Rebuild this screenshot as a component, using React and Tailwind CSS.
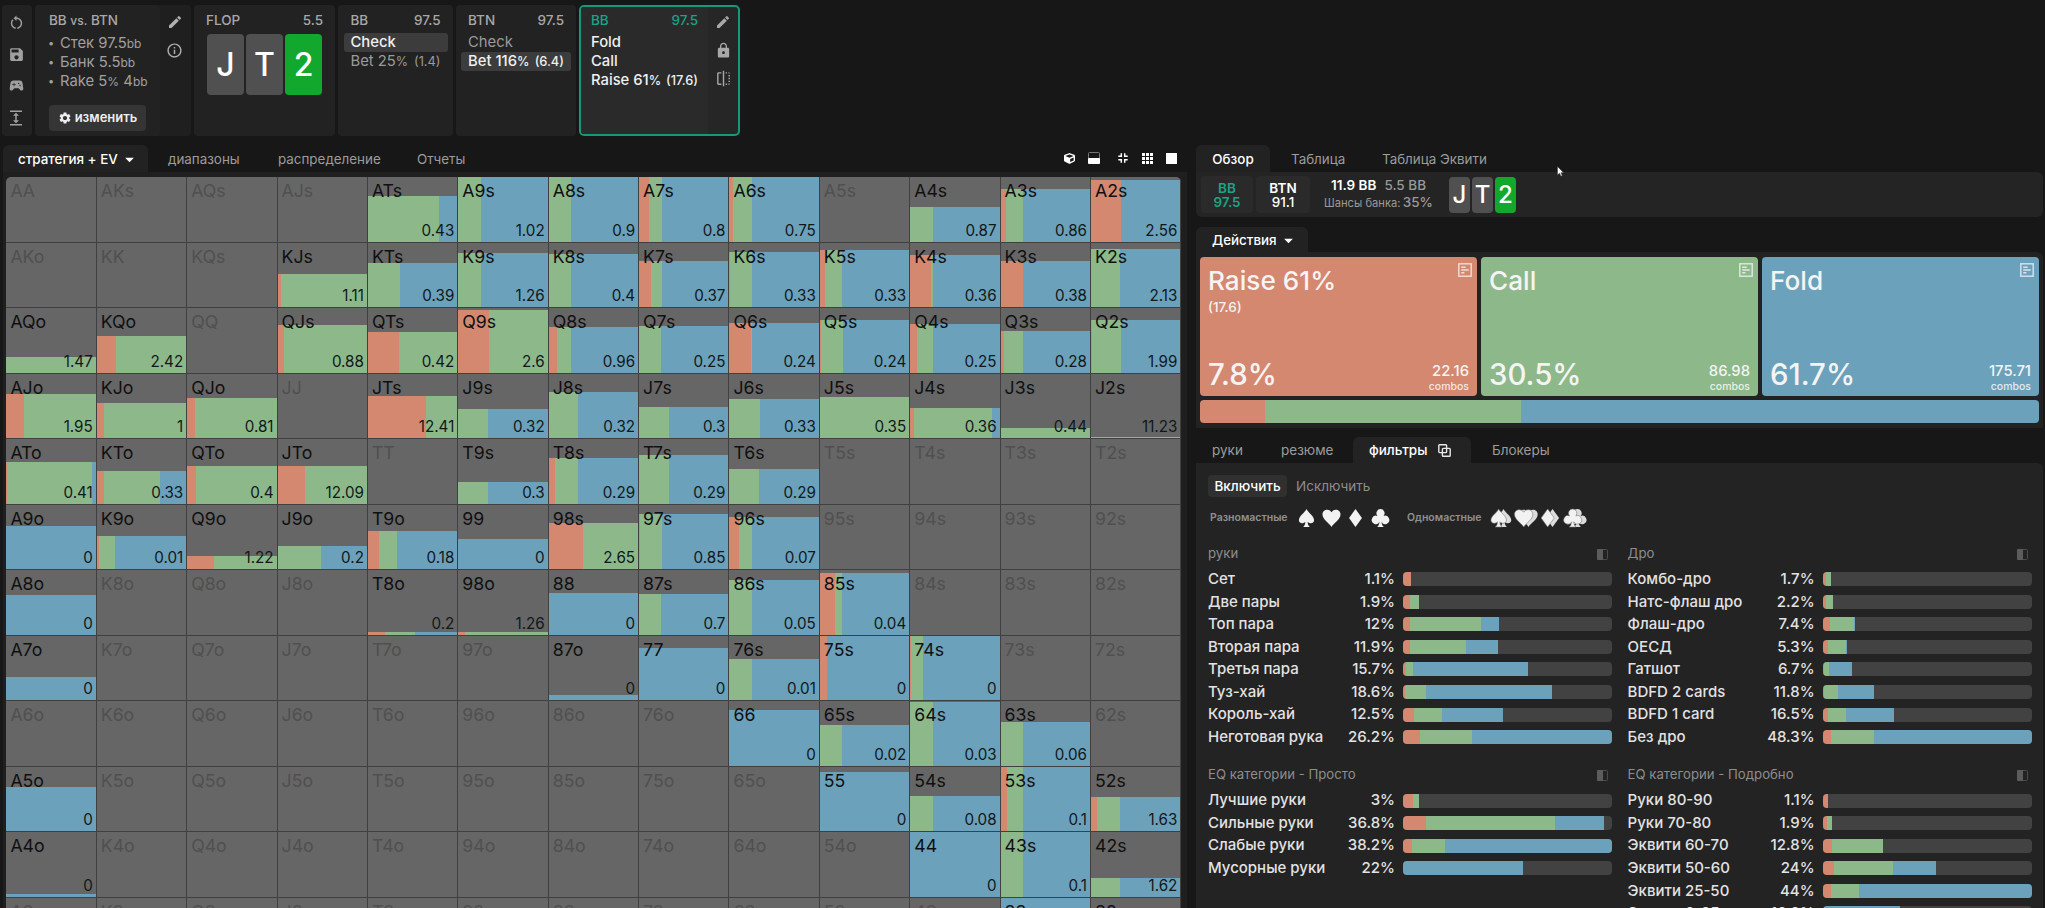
import React from "react";
import {
  MdRestartAlt,
  MdSave,
  MdSportsEsports,
  MdExpand,
  MdEdit,
  MdInfoOutline,
  MdLock,
  MdFlip,
  MdSettings,
  MdArrowDropDown,
} from "react-icons/md";
import { FaCube } from "react-icons/fa";

const RANKS = "AKQJT98765432".split("");

// hand: [ev, height %, raise %, call %] - the remainder of the width is fold
const HANDS = {
  ATs: ["0.43", 70, 0, 79],
  A9s: ["1.02", 100, 0, 25],
  A8s: ["0.9", 100, 0, 25],
  A7s: ["0.8", 100, 11.5, 14],
  A6s: ["0.75", 100, 4, 21],
  A4s: ["0.87", 53, 0, 25],
  A3s: ["0.86", 81.5, 6.5, 19],
  A2s: ["2.56", 95.5, 33.5, 0],
  KJs: ["1.11", 51, 4, 96],
  KTs: ["0.39", 67.5, 0, 35.5],
  K9s: ["1.26", 84, 0, 25],
  K8s: ["0.4", 81.5, 0, 25],
  K7s: ["0.37", 71.5, 13.5, 12],
  K6s: ["0.33", 85, 1, 24.5],
  K5s: ["0.33", 88, 6, 19],
  K4s: ["0.36", 80.5, 23.5, 1.5],
  K3s: ["0.38", 71.5, 24.5, 1],
  K2s: ["2.13", 90, 0, 33],
  AQo: ["1.47", 23.5, 0, 100],
  KQo: ["2.42", 56.5, 21.5, 78.5],
  QJs: ["0.88", 74, 7.5, 92.5],
  QTs: ["0.42", 63, 34.5, 65.5],
  Q9s: ["2.6", 97, 34.5, 65.5],
  Q8s: ["0.96", 70.5, 9, 16],
  Q7s: ["0.25", 72.5, 0, 25],
  Q6s: ["0.24", 77.5, 24, 1],
  Q5s: ["0.24", 81, 1, 24.5],
  Q4s: ["0.25", 75.5, 8, 17],
  Q3s: ["0.28", 65, 4, 21.5],
  Q2s: ["1.99", 81, 1, 33],
  AJo: ["1.95", 68.5, 19.5, 80.5],
  KJo: ["1", 54, 8, 92],
  QJo: ["0.81", 61.5, 9, 91],
  JTs: ["12.41", 64.5, 64.5, 35.5],
  J9s: ["0.32", 45.5, 0, 33],
  J8s: ["0.32", 71, 0, 33],
  J7s: ["0.3", 48.5, 0, 33.5],
  J6s: ["0.33", 61, 0, 34],
  J5s: ["0.35", 63, 0, 100],
  J4s: ["0.36", 47, 4, 88],
  J3s: ["0.44", 16, 0, 100],
  J2s: ["11.23", 1, 0, 100],
  ATo: ["0.41", 64, 1, 95],
  KTo: ["0.33", 50.5, 8, 63],
  QTo: ["0.4", 57.5, 9.5, 90.5],
  JTo: ["12.09", 58, 30.5, 69.5],
  T9s: ["0.3", 33, 0, 33],
  T8s: ["0.29", 71, 7, 26],
  T7s: ["0.29", 75.5, 0, 33.5],
  T6s: ["0.29", 53, 0, 33.5],
  A9o: ["0", 67, 0, 0],
  K9o: ["0.01", 51, 2.5, 17.5],
  Q9o: ["1.22", 19.5, 30, 70],
  J9o: ["0.2", 35.5, 0, 48.5],
  T9o: ["0.18", 59, 12, 21],
  99: ["0", 46.5, 0, 0],
  "98s": ["2.65", 72, 38.5, 61.5],
  "97s": ["0.85", 86, 1, 24.5],
  "96s": ["0.07", 81, 10.5, 14.5],
  A8o: ["0", 61, 0, 0],
  T8o: ["0.2", 4, 19.5, 33],
  "98o": ["1.26", 4, 7, 93],
  88: ["0", 65, 0, 0],
  "87s": ["0.7", 63, 0, 25],
  "86s": ["0.05", 85, 0, 25],
  "85s": ["0.04", 95.5, 16.5, 8.5],
  A7o: ["0", 35.5, 0, 0],
  "87o": ["0", 8, 0, 0],
  77: ["0", 80, 0, 0],
  "76s": ["0.01", 64, 0, 25],
  "75s": ["0", 100, 8, 0],
  "74s": ["0", 100, 1, 13.5],
  66: ["0", 86, 0, 0],
  "65s": ["0.02", 63, 0, 25],
  "64s": ["0.03", 99, 0, 25],
  "63s": ["0.06", 68, 0, 25.5],
  A5o: ["0", 69, 0, 0],
  55: ["0", 91, 0, 0],
  "54s": ["0.08", 55, 0, 25],
  "53s": ["0.1", 100, 7, 18.5],
  "52s": ["1.63", 53, 7, 26],
  A4o: ["0", 4, 0, 0],
  44: ["0", 100, 0, 0],
  "43s": ["0.1", 100, 0, 25.5],
  "42s": ["1.62", 28, 0, 33],
  33: ["0", 100, 0, 0],
  "32s": ["1.6", 20, 0, 33],
};

function handName(r, c) {
  if (r === c) return RANKS[r] + RANKS[r];
  return c > r ? RANKS[r] + RANKS[c] + "s" : RANKS[c] + RANKS[r] + "o";
}

function Cell({ name }) {
  const h = HANDS[name];
  return (
    <div className="relative flex flex-col justify-end overflow-hidden border-r border-b border-[#404040] bg-[#666666]">
      {h && (
        <div className="flex w-full" style={{ height: `${h[1]}%` }}>
          <div className="bg-[#d4886f]" style={{ width: `${h[2]}%` }} />
          <div className="bg-[#8db98a]" style={{ width: `${h[3]}%` }} />
          <div className="flex-1 bg-[#6ca1bb]" />
        </div>
      )}
      <span
        className={`absolute top-[2px] left-[4px] text-[17.7px] leading-[24px] ${h ? "text-[#101010]" : "text-[#505050]"}`}
      >
        {name}
      </span>
      {h && (
        <span className="absolute right-[3px] bottom-[1px] text-[15.2px] leading-[20px] text-[#10181a]">{h[0]}</span>
      )}
    </div>
  );
}

function PlayingCard({ children, green, small }) {
  return (
    <div
      className={`flex items-center justify-center font-medium text-white ${small ? "h-[36px] w-[21px] rounded-[4px] text-[24px]" : "h-[61px] w-[37px] rounded-[4px] text-[32px]"} ${green ? "bg-[#12a82e]" : "bg-[#505050]"}`}
    >
      {children}
    </div>
  );
}

function Action({ children, size, active, dim }) {
  return (
    <div
      className={`-mx-[7px] flex h-[19px] items-center rounded-[3px] px-[7px] whitespace-nowrap ${active ? "bg-[#3c3c3c]" : ""} ${dim ? "text-[#9a9a9a]" : "font-medium text-[#f0f0f0]"}`}
    >
      <span>{children}</span>
      {size && (
        <>
          <span className="pt-px text-[12.5px]">%</span>
          <span className="ml-auto text-[12.8px]">({size})</span>
        </>
      )}
    </div>
  );
}

function NodeHead({ name, stack, green }) {
  return (
    <div
      className={`flex h-[18px] items-center justify-between text-[13.5px] font-medium ${green ? "text-[#17a583]" : "text-[#a8a8a8]"}`}
    >
      <span>{name}</span>
      <span>{stack}</span>
    </div>
  );
}

function TopBar() {
  return (
    <div className="flex h-[131px] gap-[3px] pl-[2px] text-[14.8px]">
      <div className="flex w-[30px] flex-col items-center justify-between rounded bg-[#222222] py-[9px] pr-[2px] text-[#a0a0a0]">
        <MdRestartAlt size={17} />
        <MdSave size={17} />
        <MdSportsEsports size={17} />
        <MdExpand size={18} />
      </div>
      <div className="flex w-[156px] rounded bg-[#1f1f1f]">
        <div className="w-[125px] rounded bg-[#222222] pt-[6px] pl-[14px] text-[#a0a0a0]">
          <div className="text-[13.5px] leading-[18px] font-medium text-[#a8a8a8]">
            BB <span className="text-[12px]">vs.</span> BTN
          </div>
          <ul className="mt-[4px] -ml-px whitespace-nowrap">
            {[
              ["Стек 97.5", "bb", ""],
              ["Банк 5.5", "bb", ""],
              ["Rake 5", "%", " 4"],
            ].map(([a, b, c]) => (
              <li key={a} className="flex h-[19px] items-center">
                <span className="w-[12px] text-[11px]">•</span>
                <span>
                  {a}
                  <span className="text-[12px]">{b}</span>
                  {c && (
                    <>
                      {c}
                      <span className="text-[12px]">bb</span>
                    </>
                  )}
                </span>
              </li>
            ))}
          </ul>
          <button className="mt-[14px] flex h-[26px] w-[97px] items-center justify-center gap-[3px] rounded bg-[#353535] text-[13px] font-semibold text-[#eeeeee]">
            <MdSettings size={14} />
            изменить
          </button>
        </div>
        <div className="flex flex-1 flex-col items-center gap-[12px] pt-[9px] pr-[2px] text-[#b0b0b0]">
          <MdEdit size={16} />
          <MdInfoOutline size={17} />
        </div>
      </div>
      <div className="w-[141px] rounded bg-[#222222] px-[12px] pt-[6px]">
        <NodeHead name="FLOP" stack="5.5" />
        <div className="mt-[5px] ml-[1px] flex gap-[2px]">
          <PlayingCard>J</PlayingCard>
          <PlayingCard>T</PlayingCard>
          <PlayingCard green>2</PlayingCard>
        </div>
      </div>
      <div className="w-[115px] rounded bg-[#222222] px-[12.5px] pt-[6px]">
        <NodeHead name="BB" stack="97.5" />
        <div className="mt-[4px]">
          <Action active>Check</Action>
          <Action dim size="1.4">
            Bet 25
          </Action>
        </div>
      </div>
      <div className="w-[120px] rounded bg-[#222222] px-[12px] pt-[6px]">
        <NodeHead name="BTN" stack="97.5" />
        <div className="mt-[4px]">
          <Action dim>Check</Action>
          <Action active size="6.4">
            Bet 116
          </Action>
        </div>
      </div>
      <div className="flex w-[161px] overflow-hidden rounded-[5px] border-2 border-[#149a7a] bg-[#262626]">
        <div className="w-[127px] bg-[#2a2a2a] pt-[4px] pr-[10px] pl-[10px]">
          <NodeHead name="BB" stack="97.5" green />
          <div className="mt-[4px]">
            <Action>Fold</Action>
            <Action>Call</Action>
            <Action size="17.6">Raise 61</Action>
          </div>
        </div>
        <div className="flex flex-1 flex-col items-center gap-[11.5px] pt-[7px] text-[#a8a8a8]">
          <MdEdit size={16} />
          <MdLock size={17} />
          <MdFlip size={17} />
        </div>
      </div>
    </div>
  );
}

function GridPanel() {
  return (
    <div className="flex w-[1187px] flex-col pl-[3px]">
      <div className="flex h-[27px] shrink-0 items-center pr-[10px] text-[13.4px] text-[#9c9c9c]">
        <div className="flex h-full w-[145px] items-center rounded-t-[6px] bg-[#222222] pt-px pl-[15px] font-medium whitespace-nowrap text-white">
          стратегия + EV
          <MdArrowDropDown size={21} className="ml-px" />
        </div>
        <span className="w-[109px] pt-[2px] pl-[20px]">диапазоны</span>
        <span className="w-[140px] pt-[2px] pl-[21px]">распределение</span>
        <span className="pt-[2px] pl-[20px]">Отчеты</span>
        <div className="ml-auto flex items-center pb-px text-white">
          <FaCube size={11} className="mr-[13px]" />
          <svg width="12" height="12" viewBox="0 0 12 12" className="mr-[18px]">
            <rect x="0.5" y="0.5" width="11" height="11" rx="1" fill="none" stroke="#777" />
            <rect x="0" y="6" width="12" height="6" rx="1" fill="#fff" />
          </svg>
          <svg width="10" height="10" viewBox="0 0 10 10" className="mr-[14px]" fill="none" stroke="#fff" strokeWidth="1.5">
            <path d="M3.3 0.3v3h-3M6.7 0.3v3h3M3.3 9.7v-3h-3M6.7 9.7v-3h3" />
          </svg>
          <svg width="11" height="11" viewBox="0 0 11 11" className="mr-[13px]" fill="#fff">
            {[0, 4, 8].map((y) => [0, 4, 8].map((x) => <rect key={`${x}-${y}`} x={x} y={y} width="3" height="3" />))}
          </svg>
          <div className="h-[11px] w-[11px] bg-white" />
        </div>
      </div>
      <div className="min-h-0 flex-1 bg-[#1f1f1f] pt-[5px] pl-[3.4px]">
        <div className="grid h-[851.5px] w-[1175px] grid-cols-13 grid-rows-13 overflow-hidden rounded-t-[5px]">
          {RANKS.map((_, r) => RANKS.map((__, c) => <Cell key={`${r}-${c}`} name={handName(r, c)} />))}
        </div>
      </div>
    </div>
  );
}

function NoteIcon() {
  return (
    <svg width="14" height="14" viewBox="0 0 14 14" fill="none" stroke="#ffffffb8" strokeWidth="1.4">
      <rect x="0.8" y="0.8" width="12.4" height="12.4" />
      <path d="M3.2 4.2h4.5M3.2 7h7.5M3.2 9.8h3.2" />
    </svg>
  );
}

function ActionCard({ title, size, pct, combos, bg }) {
  return (
    <div className={`flex flex-1 flex-col justify-between rounded-[4px] px-[8px] pt-[6px] pb-[3px] text-[#f4f4f4] ${bg}`}>
      <div className="flex justify-between">
        <div>
          <div className="pt-[2px] text-[26.2px] leading-[32px] font-medium">{title}</div>
          {size && <div className="mt-px text-[13.5px] leading-[18px] font-medium">({size})</div>}
        </div>
        <div className="-mr-[3px]">
          <NoteIcon />
        </div>
      </div>
      <div className="flex items-end justify-between">
        <div className="pb-px text-[29.4px] leading-[34px] font-medium">{pct}</div>
        <div className="text-right font-medium">
          <div className="text-[14.8px] leading-[17px]">{combos}</div>
          <div className="text-[10.5px] leading-[13px] text-[#ffffffcc]">combos</div>
        </div>
      </div>
    </div>
  );
}

const SUITS = {
  spade: "M10 1C8 5 2 8 2 12.2c0 3 4.2 4.3 6.8 1.6C8.8 16 8 18 6.5 19h7C12 18 11.2 16 11.2 13.8c2.6 2.7 6.8 1.4 6.8-1.6C18 8 12 5 10 1z",
  heart: "M10 19C8 15.5 0.5 11.5 0.5 6.3 0.5 1.2 7.5 0 10 4.2 12.5 0 19.5 1.2 19.5 6.3 19.5 11.5 12 15.5 10 19z",
  diamond: "M10 1l6.8 9L10 19l-6.8-9z",
  club: "M10 1a4.2 4.2 0 0 0-3.3 6.9A4.3 4.3 0 1 0 8.9 13.8C8.8 16 8 18 6.5 19h7c-1.5-1-2.3-3-2.4-5.2a4.3 4.3 0 1 0 2.2-5.9A4.2 4.2 0 0 0 10 1z",
};

function Suit({ kind, double }) {
  if (!double)
    return (
      <svg width="19" height="20" viewBox="0 0 20 20" preserveAspectRatio="none" fill="#f2f2f2">
        <path d={SUITS[kind]} />
      </svg>
    );
  return (
    <svg width="24.5" height="20" viewBox="0 0 25.3 20" preserveAspectRatio="none">
      <path d={SUITS[kind]} transform="translate(5 0)" fill="#dcdcdc" />
      <path d={SUITS[kind]} fill="#f2f2f2" stroke="#777" strokeWidth="0.6" />
    </svg>
  );
}

// [label, percent, raise end, call end, fold end]
const LEFT_TOP = [
  ["Сет", "1.1%", 4, 4, 4],
  ["Две пары", "1.9%", 3.3, 7.5, 7.5],
  ["Топ пара", "12%", 3.3, 37.5, 46],
  ["Вторая пара", "11.9%", 3.5, 30, 45.6],
  ["Третья пара", "15.7%", 1.6, 5, 60],
  ["Туз-хай", "18.6%", 0.8, 11.2, 71.1],
  ["Король-хай", "12.5%", 5.1, 18.7, 47.7],
  ["Неготовая рука", "26.2%", 8.3, 33, 100],
];
const RIGHT_TOP = [
  ["Комбо-дро", "1.7%", 1.6, 3.8, 3.8],
  ["Натс-флаш дро", "2.2%", 1.4, 4.8, 4.8],
  ["Флаш-дро", "7.4%", 3.7, 15.1, 15.6],
  ["ОЕСД", "5.3%", 2.7, 11.1, 11.3],
  ["Гатшот", "6.7%", 0.6, 3.2, 14.3],
  ["BDFD 2 cards", "11.8%", 0.5, 7.2, 24.6],
  ["BDFD 1 card", "16.5%", 2.7, 11.3, 34.2],
  ["Без дро", "48.3%", 4.1, 24.5, 100],
];
const LEFT_EQ = [
  ["Лучшие руки", "3%", 5, 7.9, 7.9],
  ["Сильные руки", "36.8%", 11, 72.5, 96.3],
  ["Слабые руки", "38.2%", 4.2, 20.2, 100],
  ["Мусорные руки", "22%", 0, 0, 57.3],
];
const RIGHT_EQ = [
  ["Руки 80-90", "1.1%", 2.6, 2.6, 2.6],
  ["Руки 70-80", "1.9%", 2, 4.5, 4.5],
  ["Эквити 60-70", "12.8%", 4.5, 29, 29],
  ["Эквити 50-60", "24%", 5.5, 33.8, 54.2],
  ["Эквити 25-50", "44%", 4, 17.5, 100],
  ["Эквити 0-25", "16.2%", 0, 0, 37],
];

function FilterGroup({ title, rows }) {
  return (
    <div className="w-[404px]">
      <div className="flex h-[22px] items-center justify-between pr-[4px] text-[13.2px] text-[#8d8d8d]">
        {title}
        <svg width="11" height="11" viewBox="0 0 11 11">
          <rect x="0.5" y="0.5" width="10" height="10" rx="1" fill="none" stroke="#4c4c4c" />
          <rect x="0" y="0" width="6" height="11" rx="1" fill="#5c5c5c" />
        </svg>
      </div>
      <div className="mt-[3px]">
        {rows.map(([label, pct, a, b, c]) => (
          <div key={label} className="flex h-[22.56px] items-center text-[15px] font-medium text-[#e2e2e2]">
            <span className="flex-1 whitespace-nowrap">{label}</span>
            <span className="mr-[8px]">{pct}</span>
            <div className="flex h-[14px] w-[209px] overflow-hidden rounded-[4px] bg-[#424242]">
              <div className="bg-[#d4886f]" style={{ width: `${a}%` }} />
              <div className="bg-[#8db98a]" style={{ width: `${b - a}%` }} />
              <div className="bg-[#6ca1bb]" style={{ width: `${c - b}%` }} />
            </div>
          </div>
        ))}
      </div>
    </div>
  );
}

function Overview() {
  return (
    <>
      <div className="flex h-[27px] items-center text-[13.4px] text-[#9c9c9c]">
        <span className="flex h-full w-[74px] items-center justify-center rounded-t-[6px] bg-[#222222] pt-[2px] font-medium text-white">
          Обзор
        </span>
        <span className="ml-[21px] w-[91px] pt-[2px]">Таблица</span>
        <span className="pt-[2px]">Таблица Эквити</span>
      </div>
      <div className="flex h-[45px] items-center rounded-tr-[6px] rounded-b-[6px] bg-[#242424] pl-[5px]">
        <div className="flex h-[37px] w-[52px] flex-col items-center justify-center rounded bg-[#2a2a2a] text-[13.5px] leading-[14px] text-[#17a583]">
          <span className="font-semibold">BB</span>
          <span className="font-semibold">97.5</span>
        </div>
        <div className="ml-[3px] flex h-[37px] w-[54px] flex-col items-center justify-center rounded bg-[#2a2a2a] text-[13.5px] leading-[14px] text-white">
          <span className="font-semibold">BTN</span>
          <span className="font-medium">91.1</span>
        </div>
        <div className="ml-[14px] flex w-[109px] flex-col text-[#9a9a9a]">
          <div className="flex justify-center gap-[8px] text-[13.5px] leading-[17px]">
            <span className="font-semibold text-white">11.9 BB</span>
            <span className="font-medium">5.5 BB</span>
          </div>
          <div className="flex items-baseline justify-between text-[11.2px] leading-[17px] whitespace-nowrap">
            <span>Шансы банка:</span>
            <span className="text-[13.5px] font-medium">35%</span>
          </div>
        </div>
        <div className="ml-[16px] flex gap-[2px]">
          <PlayingCard small>J</PlayingCard>
          <PlayingCard small>T</PlayingCard>
          <PlayingCard small green>
            2
          </PlayingCard>
        </div>
      </div>
    </>
  );
}

export default function App() {
  return (
    <div className="relative flex h-[908px] w-[2045px] flex-col overflow-hidden bg-[#171717] pt-[5px] font-['Inter',sans-serif]">
      <TopBar />
      <div className="mt-[9px] flex h-[763px]">
        <GridPanel />
        <div className="ml-[9px] w-[847px]">
          <Overview />
          <div className="mt-[10px] flex h-[25px] w-[112px] items-center rounded-t-[6px] bg-[#222222] pt-px pl-[16px] text-[13.4px] font-medium text-white">
            Действия
            <MdArrowDropDown size={21} className="ml-px" />
          </div>
          <div className="h-[176px] rounded-tr-[6px] bg-[#222222] px-[4px] pt-[5px]">
            <div className="flex h-[139px] gap-[4px]">
              <ActionCard title="Raise 61%" size="17.6" pct="7.8%" combos="22.16" bg="bg-[#d4886f]" />
              <ActionCard title="Call" pct="30.5%" combos="86.98" bg="bg-[#8db98a]" />
              <ActionCard title="Fold" pct="61.7%" combos="175.71" bg="bg-[#6ca1bb]" />
            </div>
            <div className="mt-[4px] flex h-[23px] overflow-hidden rounded-[4px]">
              <div className="w-[7.7%] bg-[#d4886f]" />
              <div className="w-[30.6%] bg-[#8db98a]" />
              <div className="flex-1 bg-[#6ca1bb]" />
            </div>
          </div>
          <div className="mt-[9px] flex h-[26px] items-center text-[13.5px] text-[#9c9c9c]">
            <span className="w-[68px] pt-px pl-[16px]">руки</span>
            <span className="w-[89px] pt-px pl-[17px]">резюме</span>
            <span className="flex h-full w-[118px] items-center gap-[11px] rounded-t-[6px] bg-[#232323] pl-[16px] font-medium text-white">
              <span className="pt-px">фильтры</span>
              <svg width="13" height="13" viewBox="0 0 13 13" fill="none" stroke="#e8e8e8" strokeWidth="1.4">
                <rect x="0.8" y="0.8" width="7.8" height="7.8" rx="0.8" />
                <rect x="4.4" y="4.4" width="7.8" height="7.8" rx="0.8" />
              </svg>
            </span>
            <span className="pt-px pl-[21px]">Блокеры</span>
          </div>
          <div className="h-[460px] rounded-tr-[6px] bg-[#232323] pt-[12px] pl-[12px]">
            <div className="flex h-[22px] items-center text-[13.5px]">
              <span className="flex h-full w-[79px] items-center justify-center rounded bg-[#303030] font-medium text-white">
                Включить
              </span>
              <span className="ml-[9px] text-[#8d8d8d]">Исключить</span>
            </div>
            <div className="mt-[11px] flex h-[20px] items-center pl-[2px] text-[10.5px] font-semibold text-[#909090]">
              <span className="w-[87px]">Разномастные</span>
              <div className="flex w-[110px] gap-[5.5px]">
                <Suit kind="spade" />
                <Suit kind="heart" />
                <Suit kind="diamond" />
                <Suit kind="club" />
              </div>
              <span className="w-[82px]">Одномастные</span>
              <div className="flex">
                <Suit kind="spade" double />
                <Suit kind="heart" double />
                <Suit kind="diamond" double />
                <Suit kind="club" double />
              </div>
            </div>
            <div className="mt-[15px] flex gap-[15.6px]">
              <FilterGroup title="руки" rows={LEFT_TOP} />
              <FilterGroup title="Дро" rows={RIGHT_TOP} />
            </div>
            <div className="mt-[16px] flex gap-[15.6px]">
              <FilterGroup title="EQ категории - Просто" rows={LEFT_EQ} />
              <FilterGroup title="EQ категории - Подробно" rows={RIGHT_EQ} />
            </div>
          </div>
        </div>
      </div>
      <svg className="absolute top-[166px] left-[1557px]" width="8" height="11" viewBox="0 0 8 11">
        <path d="M0.5 0.5v8.500l2-1.800 1.500 3 1.300-.6-1.400-2.900h2.700z" fill="#fff" stroke="#333" strokeWidth="0.5" />
      </svg>
    </div>
  );
}
